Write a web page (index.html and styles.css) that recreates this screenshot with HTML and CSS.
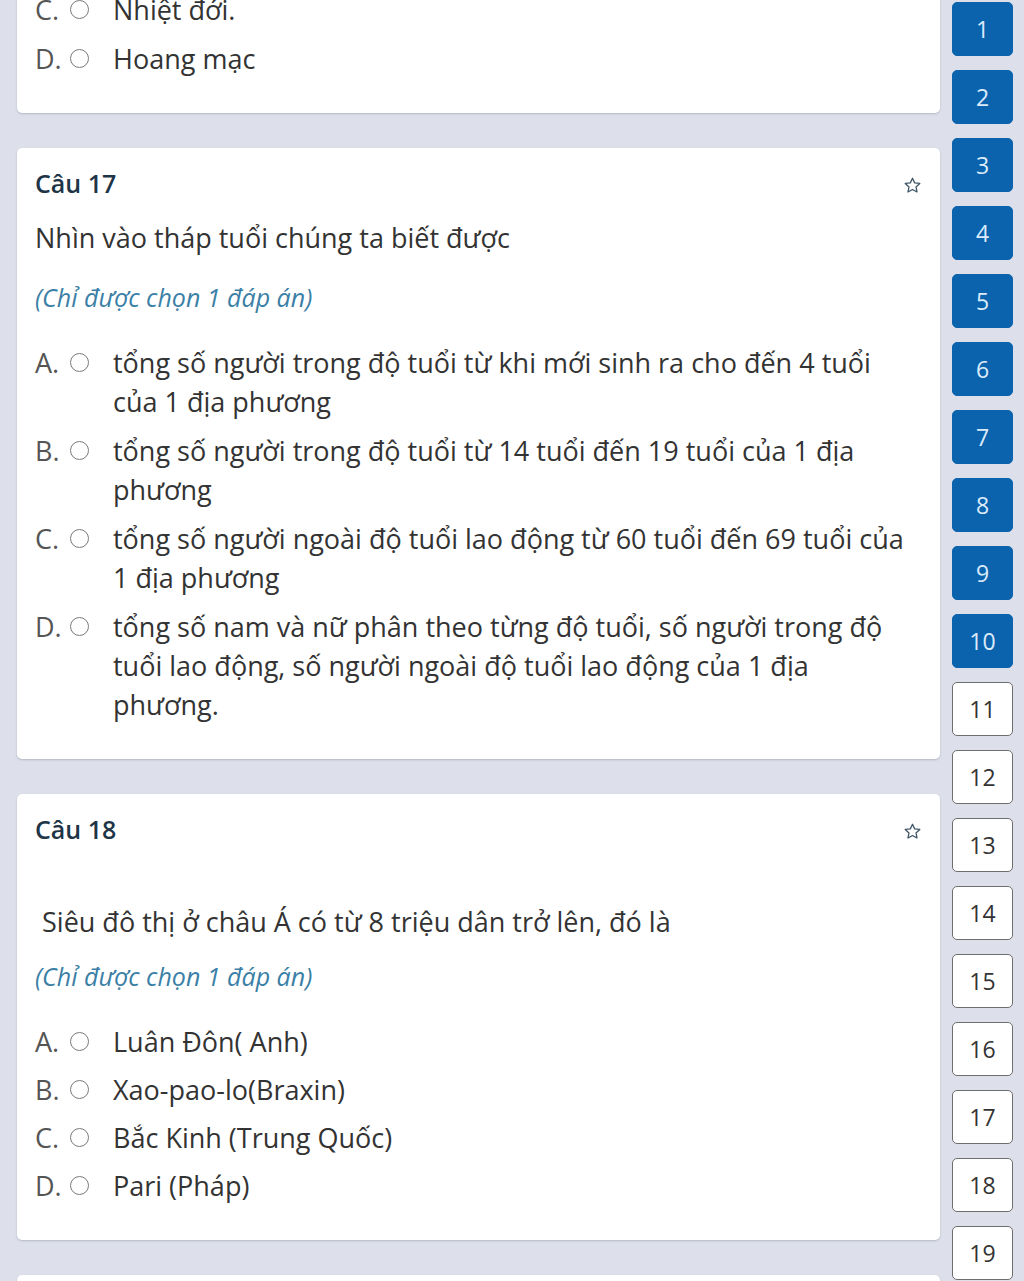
FILE: index.html
```html
<!DOCTYPE html>
<html lang="vi">
<head>
<meta charset="utf-8">
<title>Bài kiểm tra</title>
<link rel="stylesheet" href="styles.css">
</head>
<body>
<div class="page">
  <main class="questions">
    <section class="card card--partial">
      <ul class="options">
        <li class="option"><span class="opt-label">C.</span><span class="radio"></span><span class="opt-text">Nhiệt đới.</span></li>
        <li class="option"><span class="opt-label">D.</span><span class="radio"></span><span class="opt-text">Hoang mạc</span></li>
      </ul>
    </section>

    <section class="card">
      <header class="card-head">
        <h2 class="q-title">Câu 17</h2>
        <svg class="star" viewBox="0 0 24 24" width="19" height="19"><path d="M12 2.8l2.75 5.9 6.45.75-4.8 4.4 1.3 6.35L12 17l-5.7 3.2 1.3-6.35-4.8-4.4 6.45-.75z" fill="none" stroke="#3f5566" stroke-width="1.6" stroke-linejoin="round"/></svg>
      </header>
      <p class="question">Nhìn vào tháp tuổi chúng ta biết được</p>
      <p class="hint">(Chỉ được chọn 1 đáp án)</p>
      <ul class="options">
        <li class="option"><span class="opt-label">A.</span><span class="radio"></span><span class="opt-text">tổng số người trong độ tuổi từ khi mới sinh ra cho đến 4 tuổi của 1 địa phương</span></li>
        <li class="option"><span class="opt-label">B.</span><span class="radio"></span><span class="opt-text">tổng số người trong độ tuổi từ 14 tuổi đến 19 tuổi của 1 địa phương</span></li>
        <li class="option"><span class="opt-label">C.</span><span class="radio"></span><span class="opt-text">tổng số người ngoài độ tuổi lao động từ 60 tuổi đến 69 tuổi của 1 địa phương</span></li>
        <li class="option"><span class="opt-label">D.</span><span class="radio"></span><span class="opt-text">tổng số nam và nữ phân theo từng độ tuổi, số người trong độ tuổi lao động, số người ngoài độ tuổi lao động của 1 địa phương.</span></li>
      </ul>
    </section>

    <section class="card">
      <header class="card-head">
        <h2 class="q-title">Câu 18</h2>
        <svg class="star" viewBox="0 0 24 24" width="19" height="19"><path d="M12 2.8l2.75 5.9 6.45.75-4.8 4.4 1.3 6.35L12 17l-5.7 3.2 1.3-6.35-4.8-4.4 6.45-.75z" fill="none" stroke="#3f5566" stroke-width="1.6" stroke-linejoin="round"/></svg>
      </header>
      <p class="question question--spaced">&nbsp;Siêu đô thị ở châu Á có từ 8 triệu dân trở lên, đó là</p>
      <p class="hint hint--close">(Chỉ được chọn 1 đáp án)</p>
      <ul class="options">
        <li class="option"><span class="opt-label">A.</span><span class="radio"></span><span class="opt-text">Luân Đôn( Anh)</span></li>
        <li class="option"><span class="opt-label">B.</span><span class="radio"></span><span class="opt-text">Xao-pao-lo(Braxin)</span></li>
        <li class="option"><span class="opt-label">C.</span><span class="radio"></span><span class="opt-text">Bắc Kinh (Trung Quốc)</span></li>
        <li class="option"><span class="opt-label">D.</span><span class="radio"></span><span class="opt-text">Pari (Pháp)</span></li>
      </ul>
    </section>

    <section class="card card--next"></section>
  </main>

  <nav class="nav">
    <a class="num num--done">1</a>
    <a class="num num--done">2</a>
    <a class="num num--done">3</a>
    <a class="num num--done">4</a>
    <a class="num num--done">5</a>
    <a class="num num--done">6</a>
    <a class="num num--done">7</a>
    <a class="num num--done">8</a>
    <a class="num num--done">9</a>
    <a class="num num--done">10</a>
    <a class="num">11</a>
    <a class="num">12</a>
    <a class="num">13</a>
    <a class="num">14</a>
    <a class="num">15</a>
    <a class="num">16</a>
    <a class="num">17</a>
    <a class="num">18</a>
    <a class="num">19</a>
  </nav>
</div>
</body>
</html>
```
FILE: styles.css
```css
* { box-sizing: border-box; }
html, body { margin: 0; padding: 0; }
body {
  background: #dde0ea;
  font-family: "Open Sans", "Noto Sans", sans-serif;
  color: #333;
  overflow: hidden;
  height: 1281px;
}
.page {
  display: flex;
  align-items: flex-start;
  padding-left: 17px;
}
.questions {
  width: 923px;
  margin-top: -30px;
  display: flex;
  flex-direction: column;
  gap: 35px;
}
.card {
  background: #fff;
  border-radius: 5px;
  box-shadow: 0 1px 2px rgba(60, 70, 90, 0.25);
  padding: 20px 22px 35px 18px;
}
.card--partial { padding-top: 20px; }
.card--next { height: 200px; }
.card-head {
  display: flex;
  justify-content: space-between;
  align-items: center;
  height: 30px;
}
.q-title {
  margin: 0;
  font-size: 25px;
  font-weight: 600;
  line-height: 30px;
  color: #1e3547;
}
.star { margin-right: -4px; margin-top: 4px; }
.question {
  margin: 20px 0 0;
  font-size: 27px;
  line-height: 39px;
  color: #333;
}
.question--spaced { padding-top: 38px; }
.hint {
  margin: 24px 0 0;
  font-size: 25px;
  line-height: 32px;
  font-style: italic;
  color: #3b7fa6;
}
.hint--close { margin-top: 19px; }
.hint--close + .options { gap: 9px; }
.options {
  list-style: none;
  margin: 30px 0 0;
  padding: 0;
  display: flex;
  flex-direction: column;
  gap: 10px;
}
.card--partial .options { margin-top: 0; }
.option {
  display: flex;
  align-items: flex-start;
  font-size: 27px;
  line-height: 39px;
}
.opt-label {
  width: 35px;
  flex: none;
  color: #555;
}
.radio {
  flex: none;
  width: 19px;
  height: 19px;
  margin-top: 10px;
  border: 1.5px solid #7a7a7a;
  border-radius: 50%;
  background: #fff;
}
.opt-text {
  margin-left: 24px;
  color: #333;
}
.nav {
  width: 61px;
  margin-left: 12px;
  padding-top: 2px;
  display: flex;
  flex-direction: column;
  gap: 14px;
}
.num {
  height: 54px;
  display: flex;
  align-items: center;
  justify-content: center;
  border-radius: 5px;
  font-size: 23px;
  color: #333;
  background: #fff;
  border: 1.5px solid #6e6e6e;
}
.num--done {
  background: #0b63ae;
  border-color: #0b63ae;
  color: #dcecfb;
}
```
